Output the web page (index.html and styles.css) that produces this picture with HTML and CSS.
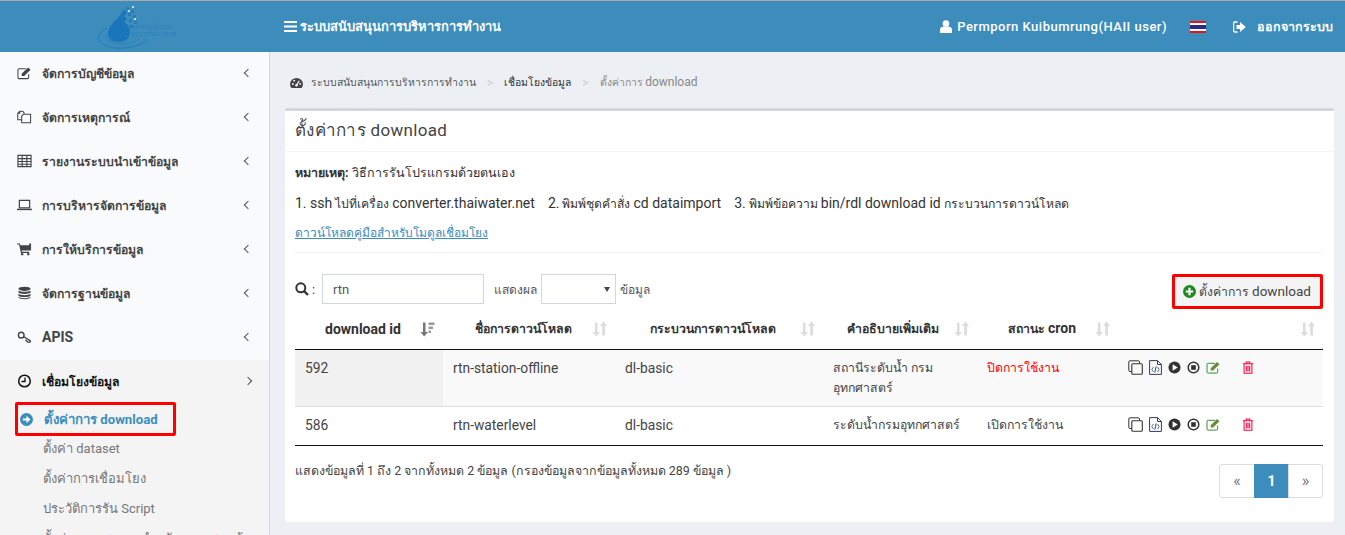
FILE: index.html
```html
<!doctype html>
<html>
  <head>
    <meta charset="utf-8" />
    <title>ตั้งค่าการ download</title>
    <link rel="stylesheet" href="styles.css">
  </head>
  <body>
    <svg class="sprite" width="0" height="0">
      <symbol id="i-edit" viewBox="0 0 16 14"><path d="M12.500 8.200V11.700a1.300 1.300 0 0 1-1.300 1.300H2.300A1.300 1.300 0 0 1 1 11.700V3.800A1.300 1.300 0 0 1 2.300 2.500h7.200" fill="none" stroke="currentColor" stroke-width="1"/><path d="M5 7.800 11.800 1l2.700 2.500L7.600 10.300H5z" fill="#6d8a3a"/></symbol>
      <symbol id="i-note" viewBox="0 0 16 14"><path d="M12.500 8.200V11.700a1.300 1.300 0 0 1-1.300 1.300H2.300A1.300 1.300 0 0 1 1 11.700V3.800A1.300 1.300 0 0 1 2.300 2.500h7.200" fill="none" stroke="currentColor" stroke-width="1.100"/><path d="M5 7.800 11.800 1l2.700 2.500L7.600 10.300H5z" fill="currentColor"/></symbol>
      <symbol id="i-copy" viewBox="0 0 15 15"><path d="M3.500 11.500H2A1.200 1.200 0 0 1 .8 10.300V2A1.200 1.200 0 0 1 2 .8H10.300A1.200 1.200 0 0 1 11.500 2V3.500" fill="none" stroke="currentColor" stroke-width="1"/><rect x="3.800" y="3.800" width="10.500" height="10.500" rx="1" fill="none" stroke="currentColor" stroke-width="1.100"/></symbol>
      <symbol id="i-code" viewBox="0 0 13 15"><path d="M.6.6H8.500L12.400 4.500V14.400H.6zM8.500.6V4.500H12.400" fill="none" stroke="#33395f" stroke-width="1"/><path d="M4.500 7 2.800 9.500 4.500 12M8.500 7l1.700 2.500L8.500 12" fill="none" stroke="#4a78b0" stroke-width="1"/><path d="M7.200 6.500 5.800 12.500" stroke="#444" stroke-width="1"/></symbol>
      <symbol id="i-play" viewBox="0 0 14 14"><circle cx="7" cy="7" r="6.500" fill="#333"/><path d="M5 3.500 10.500 7 5 10.500z" fill="#fff"/></symbol>
      <symbol id="i-stop" viewBox="0 0 14 14"><circle cx="7" cy="7" r="5.700" fill="none" stroke="#333" stroke-width="1.600"/><rect x="4.500" y="4.500" width="5" height="5" fill="#333"/></symbol>
      <symbol id="i-trash" viewBox="0 0 12 14"><path d="M.5 3H11.500M4 3V1H8V3M1.800 3V13.300H10.200V3M4.200 5V11.300M6 5V11.300M7.800 5V11.300" fill="none" stroke="#ff0040" stroke-width="1.100"/></symbol>
      <symbol id="i-sort" viewBox="0 0 15 16"><path d="M3 1.500H5.500V11H8L4.200 15.500.5 11H3z" fill="currentColor"/><path d="M11.500.5 15 5H13V14.500H10.200V5H8z" fill="currentColor"/></symbol>
      <symbol id="i-sorted" viewBox="0 0 15 16"><path d="M3 1.500H5.500V11H8L4.200 15.500.5 11H3z" fill="#777"/><path d="M8.500 1.500H14.500V4H8.500zM8.500 5.500H13V8H8.500zM8.500 9.500H11V12H8.500z" fill="#999"/></symbol>
    </svg>

    <header class="topbar">
      <div class="logo">
        <svg width="60" height="50" viewBox="0 0 60 50">
          <path d="M27 8C24 16 12 23 11 31c-1 7 5 10 11 10 7 0 11-4 11-10 0-3-1-5-2-7l-4-3 3-3-3-3 3-3z" fill="#1a76bb"/>
          <path d="M29 6h3v3h-3zM34 9h3v3h-3zM31 12h3v3h-3zM36 14h3v3h-3zM32 18h3v3h-3zM37 20h3v3h-3zM33 24h3v3h-3z" fill="#2a7ab5"/>
          <path d="M31 9h2v2h-2zM35 5h2v2h-2zM37 17h2v2h-2z" fill="#c5dbe9"/>
          <path d="M10 27C3 31 0 35 2 39c3 6 14 9 26 8 12-1 20-5 22-9" fill="none" stroke="#2a80bd" stroke-width="1.300"/>
          <path d="M9 33C8 38 15 43 25 43c8 0 14-2 17-6" fill="none" stroke="#2a80bd" stroke-width="1"/>
        </svg>
        <span class="logo-text">หลังข้อมูลน้ำและ<br>ภูมิอากาศแห่งชาติ</span>
      </div>
      <div class="topbar-main">
        <div class="topbar-title">
          <svg width="13" height="11" viewBox="0 0 13 11"><path d="M0 1h13M0 5.500h13M0 10h13" stroke="#fff" stroke-width="2"/></svg>
          <span>ระบบสนับสนุนการบริหารการทำงาน</span>
        </div>
        <div class="topbar-right">
          <span class="top-item">
            <svg width="12" height="13" viewBox="0 0 12 13"><circle cx="6" cy="3.500" r="3.300" fill="#fff"/><path d="M0 13V9.500C0 7.500 2 6.500 3.500 6.500h5C10 6.500 12 7.500 12 9.500V13z" fill="#fff"/></svg>
            <span>Permporn Kuibumrung(HAII user)</span>
          </span>
          <span class="flag"></span>
          <span class="top-item top-exit">
            <svg width="13" height="12" viewBox="0 0 13 12"><path d="M4.500 1H2a1.400 1.400 0 0 0-1.400 1.400v7.200A1.400 1.400 0 0 0 2 11h2.500" fill="none" stroke="#fff" stroke-width="1.300"/><path d="M3.500 4H7V1l5.800 5L7 11V8H3.500z" fill="#fff"/></svg>
            <span>ออกจากระบบ</span>
          </span>
        </div>
      </div>
    </header>

    <div class="layout">
      <nav class="sidebar">
        <a class="nav-item"><svg class="nav-icon"><use href="#i-note"/></svg><span>จัดการบัญชีข้อมูล</span><i class="chev"></i></a>
        <a class="nav-item"><svg class="nav-icon" viewBox="0 0 16 14"><path d="M6 .8H3L.8 3v7H5M6 .8 7.500 2.500V4M.8 3H3V.8M5 13.200V6L7 4h7.500v9.200z" fill="none" stroke="currentColor" stroke-width="1.100"/></svg><span>จัดการเหตุการณ์</span><i class="chev"></i></a>
        <a class="nav-item"><svg class="nav-icon" viewBox="0 0 16 14"><path d="M1 1h14v12H1zM1 4.500h14M1 7.500h14M1 10.500h14M5.500 1v12M10.500 1v12" fill="none" stroke="currentColor" stroke-width="1.200"/></svg><span>รายงานระบบนำเข้าข้อมูล</span><i class="chev"></i></a>
        <a class="nav-item"><svg class="nav-icon" viewBox="0 0 16 14"><path d="M2.500 2h11v8h-11z" fill="none" stroke="currentColor" stroke-width="1.300"/><path d="M0 11h16v1.500H0z" fill="currentColor"/></svg><span>การบริหารจัดการข้อมูล</span><i class="chev"></i></a>
        <a class="nav-item"><svg class="nav-icon" viewBox="0 0 16 14"><path d="M0 1h3l.6 2H13V1h2v7.500H5L5.500 10H13v1.200H4.200L2.200 2.200H0z" fill="currentColor"/><circle cx="5.500" cy="12.500" r="1.300" fill="currentColor"/><circle cx="12" cy="12.500" r="1.300" fill="currentColor"/></svg><span>การให้บริการข้อมูล</span><i class="chev"></i></a>
        <a class="nav-item"><svg class="nav-icon" viewBox="0 0 16 14"><ellipse cx="8" cy="2.500" rx="6.500" ry="2.300" fill="currentColor"/><path d="M1.500 4.200c1 2 12 2 13 0v2.300c-1 2-12 2-13 0zM1.500 7.800c1 2 12 2 13 0v2c-1 2-12 2-13 0zM1.500 11c1 2 12 2 13 0v.8c-1 2.400-12 2.400-13 0z" fill="currentColor"/></svg><span>จัดการฐานข้อมูล</span><i class="chev"></i></a>
        <a class="nav-item apis"><svg class="nav-icon" viewBox="0 0 16 14"><circle cx="4.500" cy="5" r="3" fill="none" stroke="currentColor" stroke-width="1.500"/><path d="M7 6.500 14 11v1.500h-2.500L10 11l-1-1" fill="none" stroke="currentColor" stroke-width="1.500"/></svg><span>APIS</span><i class="chev"></i></a>

        <div class="nav-group">
          <a class="nav-item nav-open"><svg class="nav-icon" viewBox="0 0 14 14"><circle cx="7" cy="7" r="5.800" fill="none" stroke="currentColor" stroke-width="1.500"/><path d="M7.500 3.500V7.500H4" fill="none" stroke="currentColor" stroke-width="1.300"/></svg><span>เชื่อมโยงข้อมูล</span><i class="chev chev-open"></i></a>
          <a class="sub-current">
            <svg width="13" height="13" viewBox="0 0 14 14"><circle cx="7" cy="7" r="7" fill="#3c8dbc"/><path d="M3 5.800h4V3l4.200 4L7 11V8.200H3z" fill="#fff"/></svg>
            <span>ตั้งค่าการ download</span>
          </a>
          <a class="sub-item">ตั้งค่า dataset</a>
          <a class="sub-item">ตั้งค่าการเชื่อมโยง</a>
          <a class="sub-item">ประวัติการรัน Script</a>
          <a class="sub-item">ตั้งค่าการแสดงผลสำหรับตรวจสอบข้อมูล</a>
        </div>
      </nav>

      <main class="content">
        <div class="breadcrumb">
          <svg width="13" height="12" viewBox="0 0 14 13"><path d="M7 1a7 6.500 0 0 0-7 6.500c0 1.800.6 3.300 1.500 4.500h11c.9-1.200 1.500-2.700 1.500-4.500A7 6.500 0 0 0 7 1z" fill="#444"/><path d="M7 9 10 4" stroke="#fff" stroke-width="1.300"/><circle cx="3" cy="7.500" r="1" fill="#fff"/><circle cx="4.500" cy="4" r="1" fill="#fff"/><circle cx="11" cy="7.500" r="1" fill="#fff"/><circle cx="7" cy="9" r="1.300" fill="#fff"/></svg>
          <span>ระบบสนับสนุนการบริหารการทำงาน</span><b>&gt;</b><span class="crumb-mid">เชื่อมโยงข้อมูล</span><b>&gt;</b><span class="crumb-last">ตั้งค่าการ <span class="crumb-en">download</span></span>
        </div>

        <section class="panel">
          <h1 class="panel-title">ตั้งค่าการ download</h1>
          <div class="panel-body">
            <div class="notes">
              <p><strong>หมายเหตุ:</strong> วิธีการรันโปรแกรมด้วยตนเอง</p>
              <p class="steps"><span class="en">1. ssh</span> ไปที่เครื่อง <span class="en">converter.thaiwater.net</span> <span class="step"><span class="en">2.</span> พิมพ์ชุดคำสั่ง <span class="en">cd dataimport</span></span> <span class="step"><span class="en">3.</span> พิมพ์ข้อความ <span class="en">bin/rdl download id</span> กระบวนการดาวน์โหลด</span></p>
              <p><a class="manual-link">ดาวน์โหลดคู่มือสำหรับโมดูลเชื่อมโยง</a></p>
            </div>

            <div class="toolbar">
              <svg width="14" height="14" viewBox="0 0 14 14"><circle cx="5.800" cy="5.800" r="4.500" fill="none" stroke="#333" stroke-width="2"/><path d="M9 9l4 4" stroke="#333" stroke-width="2.400"/></svg>
              <span class="colon">:</span>
              <input class="search" type="text" value="rtn">
              <span class="show-label">แสดงผล</span>
              <span class="select"><i></i></span>
              <span class="unit-label">ข้อมูล</span>
              <a class="add-btn">
                <svg width="13" height="13" viewBox="0 0 14 14"><circle cx="7" cy="7" r="7" fill="#1d8a1d"/><path d="M3 7h8M7 3v8" stroke="#fff" stroke-width="2.400"/></svg>
                <span>ตั้งค่าการ <span class="en">download</span></span>
              </a>
            </div>

            <table class="grid">
              <thead>
                <tr>
                  <th class="col-id"><div class="th-in"><span class="en">download id</span><svg class="sorted"><use href="#i-sorted"/></svg></div></th>
                  <th class="col-name"><div class="th-in"><span>ชื่อการดาวน์โหลด</span><svg class="sort"><use href="#i-sort"/></svg></div></th>
                  <th class="col-proc"><div class="th-in"><span>กระบวนการดาวน์โหลด</span><svg class="sort"><use href="#i-sort"/></svg></div></th>
                  <th class="col-desc"><div class="th-in"><span>คำอธิบายเพิ่มเติม</span><svg class="sort"><use href="#i-sort"/></svg></div></th>
                  <th class="col-cron"><div class="th-in"><span>สถานะ <span class="en">cron</span></span><svg class="sort"><use href="#i-sort"/></svg></div></th>
                  <th class="col-act"><div class="th-in th-end"><svg class="sort"><use href="#i-sort"/></svg></div></th>
                </tr>
              </thead>
              <tbody>
                <tr class="odd">
                  <td class="sorted-cell">592</td>
                  <td>rtn-station-offline</td>
                  <td>dl-basic</td>
                  <td class="thai">สถานีระดับน้ำ กรมอุทกศาสตร์</td>
                  <td class="thai off">ปิดการใช้งาน</td>
                  <td>
                    <div class="actions">
                      <svg class="a-copy"><use href="#i-copy"/></svg>
                      <svg class="a-code"><use href="#i-code"/></svg>
                      <svg class="a-play"><use href="#i-play"/></svg>
                      <svg class="a-play"><use href="#i-stop"/></svg>
                      <svg class="a-edit"><use href="#i-edit"/></svg>
                      <svg class="a-trash"><use href="#i-trash"/></svg>
                    </div>
                  </td>
                </tr>
                <tr class="even">
                  <td>586</td>
                  <td>rtn-waterlevel</td>
                  <td>dl-basic</td>
                  <td class="thai">ระดับน้ำกรมอุทกศาสตร์</td>
                  <td class="thai">เปิดการใช้งาน</td>
                  <td>
                    <div class="actions">
                      <svg class="a-copy"><use href="#i-copy"/></svg>
                      <svg class="a-code"><use href="#i-code"/></svg>
                      <svg class="a-play"><use href="#i-play"/></svg>
                      <svg class="a-play"><use href="#i-stop"/></svg>
                      <svg class="a-edit"><use href="#i-edit"/></svg>
                      <svg class="a-trash"><use href="#i-trash"/></svg>
                    </div>
                  </td>
                </tr>
              </tbody>
            </table>

            <div class="table-foot">
              <span class="info">แสดงข้อมูลที่ 1 ถึง 2 จากทั้งหมด 2 ข้อมูล (กรองข้อมูลจากข้อมูลทั้งหมด 289 ข้อมูล )</span>
              <div class="pager">
                <a>«</a><a class="current">1</a><a>»</a>
              </div>
            </div>
          </div>
        </section>
      </main>
    </div>
  </body>
</html>
```

FILE: styles.css
```css
* {
  box-sizing: border-box;
}
html,
body {
  margin: 0;
  height: 535px;
  overflow: hidden;
  background: #ecf0f5;
  color: #333;
  font-family: Roboto, "Noto Sans", sans-serif;
  font-size: 12.5px;
}
a {
  color: inherit;
  text-decoration: none;
}
.en {
  font-size: 14px;
}
.sprite {
  position: absolute;
}
.topbar {
  display: flex;
  height: 52px;
  background: #3c8dbc;
  border-top: 1px solid #a9a9a9;
  color: #fff;
}
.logo {
  width: 269px;
  padding-left: 97px;
  position: relative;
}
.logo-text {
  font-size: 5.500px;
  line-height: 7px;
  color: #2a80bd;
  position: absolute;
  left: 131px;
  top: 23px;
}
.topbar-main {
  flex: 1;
  display: flex;
  align-items: center;
  justify-content: space-between;
  padding: 0 12px 0 15px;
}
.topbar-title {
  font-size: 12.950px;
  font-weight: 700;
  display: flex;
  align-items: center;
  gap: 3px;
}
.topbar-right {
  display: flex;
  align-items: center;
  font-size: 13px;
  font-weight: 500;
  letter-spacing: 0.5px;
}
.top-item {
  display: flex;
  align-items: center;
  gap: 5px;
}
.top-exit {
  gap: 11px;
  font-size: 12.500px;
  font-weight: 700;
  letter-spacing: 0;
}
.flag {
  width: 16px;
  height: 12px;
  margin: 0 27px 0 23px;
  background: linear-gradient(#e11 0 16%, #fff 16% 33%, #2d2a7a 33% 67%, #fff 67% 84%, #e11 84%);
}
.layout {
  display: flex;
  height: 483px;
}
.sidebar {
  width: 270px;
  flex: none;
  background: #f9fafc;
  border-right: 1px solid #d2d6de;
  overflow: hidden;
}
.nav-item {
  display: flex;
  align-items: center;
  height: 44px;
  padding: 0 18px 2px 17px;
  font-weight: 700;
  color: #444;
  font-size: 12.200px;
}
.nav-item span {
  flex: 1;
  margin-left: 10px;
}
.nav-icon {
  width: 15px;
  height: 14px;
  flex: none;
}
.apis {
  font-size: 14px;
}
.chev {
  width: 6px;
  height: 6px;
  border-left: 1px solid #555;
  border-bottom: 1px solid #555;
  transform: rotate(45deg);
}
.chev-open {
  transform: rotate(225deg);
}
.nav-group {
  background: #f4f4f5;
}
.nav-open {
  color: #111;
}
.sub-current {
  display: flex;
  align-items: center;
  gap: 11px;
  width: 161px;
  height: 34px;
  margin: -2px 0 0 15px;
  padding-left: 2px;
  border: 3px solid #f00;
  border-radius: 2px;
  color: #3c8dbc;
  font-weight: 700;
  font-size: 13.200px;
  white-space: nowrap;
}
.sub-item {
  display: block;
  height: 30px;
  line-height: 30px;
  padding-left: 43px;
  color: #777;
  white-space: nowrap;
  font-size: 13px;
}
.sub-current + .sub-item {
  margin-top: -2px;
}
.content {
  flex: 1;
  padding: 0 11px 0 15px;
}
.breadcrumb {
  display: flex;
  align-items: center;
  height: 56px;
  padding: 5px 0 0 5px;
  gap: 9px;
  font-size: 10.400px;
  color: #555;
}
.breadcrumb svg {
  margin-right: -1px;
}
.breadcrumb b {
  color: #ccc;
  font-weight: 400;
  margin: 0 2px;
  font-size: 12px;
}
.crumb-mid {
  color: #333;
}
.crumb-last {
  color: #888;
}
.crumb-en {
  font-size: 12px;
}
.panel {
  background: #fff;
  border-top: 3px solid #d2d6de;
  border-radius: 3px;
  height: 414px;
}
.panel-title {
  margin: 0;
  height: 41px;
  line-height: 39px;
  padding-left: 10px;
  font-size: 17px;
  font-weight: 400;
  color: #444;
  letter-spacing: 0.3px;
  border-bottom: 1px solid #f4f4f4;
}
.panel-body {
  padding: 0 11px 0 10px;
}
.notes {
  height: 101px;
  padding-top: 6px;
  border-bottom: 1px solid #f4f4f4;
}
.notes p {
  margin: 0;
  height: 30px;
  line-height: 30px;
  white-space: nowrap;
}
.notes .steps {
  font-size: 12.200px;
}
.step {
  margin-left: 10px;
}
.manual-link {
  color: #3c8dbc;
  font-size: 12px;
  text-decoration: underline;
}
.toolbar {
  display: flex;
  align-items: center;
  height: 56px;
  padding-top: 16px;
}
.colon {
  margin: 0 7px 0 3px;
}
.search {
  width: 162px;
  height: 30px;
  padding: 0 10px;
  border: 1px solid #d2d6de;
  font: 13px Roboto, sans-serif;
  color: #555;
}
.show-label {
  margin: 0 4px 0 10px;
  color: #555;
  font-size: 12px;
}
.select {
  position: relative;
  width: 75px;
  height: 30px;
  border: 1px solid #d2d6de;
}
.select i {
  position: absolute;
  right: 5px;
  top: 12px;
  border: 3px solid transparent;
  border-top: 5px solid #444;
  border-bottom: 0;
}
.unit-label {
  margin-left: 4px;
  color: #555;
  font-size: 12px;
}
.add-btn {
  align-self: flex-start;
  margin: 5px 0 0 auto;
  display: flex;
  align-items: center;
  gap: 3px;
  width: 151px;
  height: 35px;
  padding: 0 0 0 8px;
  border: 3px solid #f00;
  border-radius: 2px;
  background: #f4f4f4;
  color: #444;
  font-size: 12.200px;
  white-space: nowrap;
}
.add-btn .en {
  font-size: 13.500px;
}
.grid {
  width: 100%;
  table-layout: fixed;
  border-collapse: collapse;
  border-bottom: 1px solid #111;
}
.grid th {
  height: 40px;
  padding: 0 8px 0 10px;
  border-bottom: 1px solid #111;
  font-size: 12.300px;
  color: #333;
  white-space: nowrap;
}
.col-id { width: 148px; }
.col-name { width: 172px; }
.col-proc { width: 208px; }
.col-desc { width: 154px; }
.col-cron { width: 141px; }
.th-in {
  display: flex;
  align-items: center;
  justify-content: space-between;
  padding-left: 20px;
}
.col-name .th-in { padding-left: 22px; }
.col-proc .th-in { padding-left: 25px; }
.col-desc .th-in { padding-left: 14px; }
.col-cron .th-in { padding-left: 21px; }
.th-end {
  justify-content: flex-end;
}
.sort,
.sorted {
  width: 15px;
  height: 16px;
  color: #ddd;
  flex: none;
}
.grid td {
  padding: 8px 10px;
  vertical-align: top;
  line-height: 20px;
  color: #444;
  font-size: 13.800px;
}
.grid .thai {
  font-size: 12.300px;
}
.odd td {
  background: #f9f9f9;
  border-bottom: 1px solid #ddd;
  height: 57px;
}
.even td {
  height: 39px;
}
.odd .sorted-cell {
  background: #f1f1f1;
}
.odd .off {
  color: #f00;
}
.actions {
  display: flex;
  align-items: center;
  height: 20px;
}
.actions svg {
  flex: none;
}
.a-copy {
  width: 15px;
  height: 15px;
  margin-right: 6px;
  color: #333;
}
.a-code {
  width: 13px;
  height: 15px;
  margin-right: 6px;
}
.a-play {
  width: 13px;
  height: 13px;
  margin-right: 6px;
}
.a-edit {
  width: 15px;
  height: 13px;
  margin-right: 21px;
  color: #1d8a1d;
}
.a-trash {
  width: 12px;
  height: 13px;
}
.table-foot {
  display: flex;
  justify-content: space-between;
  padding-top: 17px;
}
.info {
  color: #444;
  font-size: 12.400px;
  margin-top: -2px;
}
.pager {
  display: flex;
  margin-top: 1px;
}
.pager a {
  width: 35px;
  height: 34px;
  line-height: 32px;
  text-align: center;
  border: 1px solid #ddd;
  margin-left: -1px;
  color: #777;
  font-size: 16px;
}
.pager a:first-child {
  width: 36px;
  border-radius: 3px 0 0 3px;
}
.pager a:last-child {
  border-radius: 0 3px 3px 0;
}
.pager .current {
  background: #3c8dbc;
  border-color: #3c8dbc;
  color: #fff;
  font-size: 14px;
  font-weight: 700;
}
```
